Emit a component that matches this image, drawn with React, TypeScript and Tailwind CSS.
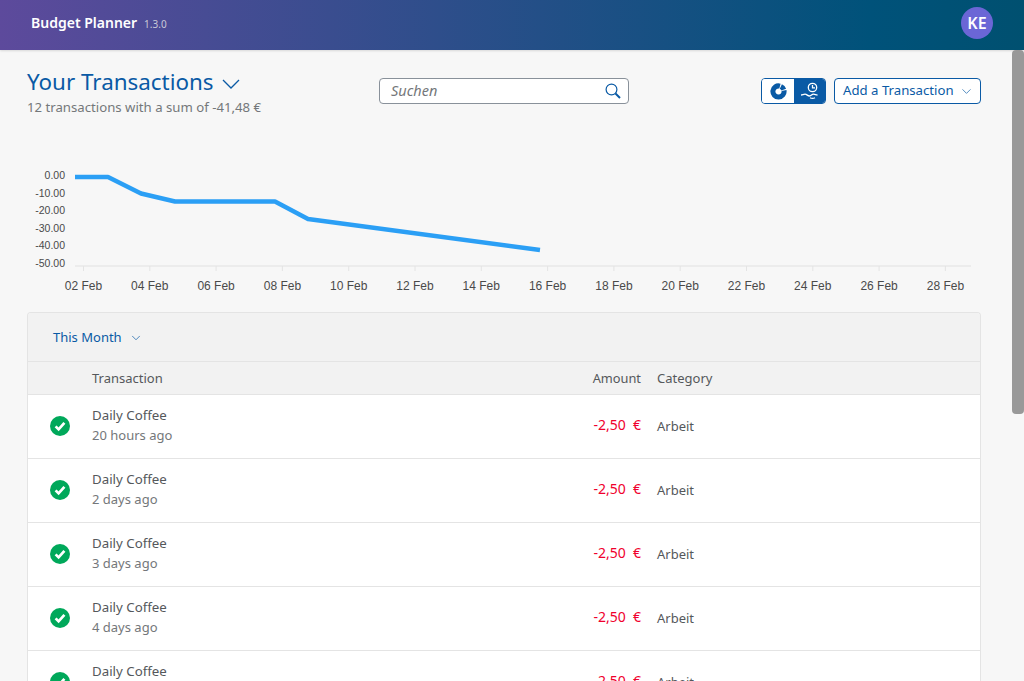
import { ChevronDown } from "lucide-react";

const ticks = ["02 Feb", "04 Feb", "06 Feb", "08 Feb", "10 Feb", "12 Feb", "14 Feb", "16 Feb", "18 Feb", "20 Feb", "22 Feb", "24 Feb", "26 Feb", "28 Feb"];
const yLabels = ["0.00", "-10.00", "-20.00", "-30.00", "-40.00", "-50.00"];
const rows = ["20 hours ago", "2 days ago", "3 days ago", "4 days ago", "5 days ago"];

function Chart() {
  return (
    <svg width="954" height="170" viewBox="27 130 954 170" className="block" style={{ fontFamily: "'Liberation Sans', Arial, sans-serif" }}>
      {yLabels.map((label, i) => (
        <text key={label} x="65" y={179 + i * 17.5} textAnchor="end" fontSize="10.5" fill="#4a4a4a">
          {label}
        </text>
      ))}
      <line x1="75" y1="266" x2="971" y2="266" stroke="#e8e8e8" strokeWidth="1.5" />
      {ticks.map((label, i) => (
        <g key={label}>
          <line x1={83.5 + i * 66.3} y1="266" x2={83.5 + i * 66.3} y2="271" stroke="#e4e4e4" />
          <text x={83.5 + i * 66.3} y="290" textAnchor="middle" fontSize="12" fill="#4a4a4a">
            {label}
          </text>
        </g>
      ))}
      <polyline
        points="75,177 108,177 141,193.5 175,201.5 275,201.5 308,219 540,250"
        fill="none"
        stroke="#2b9ff5"
        strokeWidth="4.5"
        strokeLinejoin="round"
      />
    </svg>
  );
}

function CheckIcon() {
  return (
    <svg width="20" height="20" viewBox="0 0 20 20">
      <circle cx="10" cy="10" r="10" fill="#00a85a" />
      <path d="M5.6 10.4 8.6 13.4 14.4 6.8" fill="none" stroke="#fff" strokeWidth="2.7" />
    </svg>
  );
}

function Row({ when }: { when: string }) {
  return (
    <div className="flex h-[64px] shrink-0 items-center border-t border-[#e4e4e4] bg-white pb-[2px] text-[#55585b]">
      <div className="flex w-[64px] shrink-0 justify-center pr-[1px]">
        <CheckIcon />
      </div>
      <div className="flex-1 pb-[2px] leading-[20px]">
        <div className="text-[13.3px]">Daily Coffee</div>
        <div className="text-[13px] text-[#74777a]">{when}</div>
      </div>
      <div className="w-[64px] whitespace-pre pb-[2px] text-right text-[14px] text-[#f0002d]">{"-2,50  €"}</div>
      <div className="w-[339px] pl-[16px] pt-[2px] text-[13px]">Arbeit</div>
    </div>
  );
}

export default function App() {
  return (
    <div className="flex h-[681px] flex-col overflow-hidden bg-[#f7f7f7] font-['Noto_Sans',sans-serif]">
      <header className="flex h-[50px] shrink-0 items-center justify-between bg-[linear-gradient(90deg,#5d4a9c_0%,#00527a_85%,#005070_100%)] pb-[4px] pl-[31px] pr-[31px] shadow-[0_1px_2px_rgba(0,0,0,0.12)]">
        <div className="flex items-baseline gap-[7px] pb-[2px]">
          <span className="text-[14px] font-semibold text-white">Budget Planner</span>
          <span className="text-[10px] text-[#c9c9d6]">1.3.0</span>
        </div>
        <div className="flex h-[32px] w-[32px] items-center justify-center rounded-full bg-[#6b66d6] text-[16px] font-semibold text-white">KE</div>
      </header>
      <div className="flex min-h-0 flex-1">
        <main className="min-w-0 flex-1 overflow-hidden pl-[27px] pr-[31px]">
          <div className="flex h-[80px] items-start pt-[17px]">
            <div className="w-[352px]">
              <div className="flex items-center gap-[8px] text-[22.4px] leading-[30px] text-[#0a5aa5]">
                Your Transactions
                <svg width="18" height="10" viewBox="0 0 18 10" fill="none" stroke="#0a5aa5" strokeWidth="1.3" className="mt-[3px]">
                  <path d="M1 1 9 9 17 1" />
                </svg>
              </div>
              <div className="mt-[1px] text-[13.2px] leading-[18px] text-[#74777a]">12 transactions with a sum of -41,48 €</div>
            </div>
            <div className="mt-[11px] flex h-[26px] w-[250px] items-center justify-between rounded-[4px] border border-[#89919a] bg-white pl-[11px] pr-[7px] text-[14.5px] italic text-[#74777a]">
              Suchen
              <svg width="16" height="16" viewBox="0 0 16 16" fill="none" stroke="#0a5aa5" className="mb-[1px]">
                <circle cx="6.5" cy="6.5" r="5.4" strokeWidth="1.2" />
                <path d="M10.5 10.500 15 15" strokeWidth="2" />
              </svg>
            </div>
            <div className="ml-auto mt-[11px] flex items-center gap-[8px]">
              <div className="flex h-[26px] w-[65px] overflow-hidden rounded-[4px] border border-[#0a5aa5]">
                <div className="flex w-[32px] items-center justify-center bg-white">
                  <svg width="17" height="17" viewBox="0 0 17 17" fill="none" stroke="#0a5aa5" strokeWidth="5">
                    <path d="M14 7.500A5.600 5.600 0 1 1 9.950 3.090" />
                    <path d="M10.870 3.420A5.600 5.600 0 0 1 13.760 6.580" />
                  </svg>
                </div>
                <div className="flex flex-1 items-center justify-center bg-[#0a5aa5]">
                  <svg width="20" height="18" viewBox="0 0 20 18" fill="none" stroke="#fff" strokeWidth="1.3">
                    <circle cx="12.500" cy="5.500" r="4.200" />
                    <path d="M12.500 3V5.800H15" />
                    <path d="M1 13c2 0 2-.8 4-.8s2.500 1.800 4.500 1.800 2-1.800 4-1.800 2 .8 4 .8" />
                    <path d="M10 15.800c1.500.8 3.500.8 5 0" />
                  </svg>
                </div>
              </div>
              <div className="flex h-[26px] w-[147px] items-center justify-between rounded-[4px] border border-[#0a5aa5] bg-white pl-[8px] pr-[6px] text-[13.2px] text-[#0a5aa5]">
                Add a Transaction
                <ChevronDown size={15} strokeWidth={1.1} />
              </div>
            </div>
          </div>
          <Chart />
          <section className="mt-[12px] overflow-hidden rounded-t-[4px] border-x border-t border-[#e4e4e4]">
            <div className="flex h-[48px] items-center gap-[7px] bg-[#f2f2f2] pl-[25px] pt-[2px] text-[13px] text-[#0a5aa5]">
              This Month
              <ChevronDown size={14} strokeWidth={1.2} />
            </div>
            <div className="flex h-[33px] items-center border-t border-[#e4e4e4] bg-[#f2f2f2] pt-[2px] text-[13px] text-[#55585b]">
              <div className="w-[64px]" />
              <div className="flex-1">Transaction</div>
              <div className="w-[64px] text-right text-[12.8px]">Amount</div>
              <div className="w-[339px] pl-[16px]">Category</div>
            </div>
            {rows.map((when) => (
              <Row key={when} when={when} />
            ))}
          </section>
        </main>
        <div className="w-[12px] shrink-0">
          <div className="h-[364px] rounded-[4px] bg-[#999999]" />
        </div>
      </div>
    </div>
  );
}
